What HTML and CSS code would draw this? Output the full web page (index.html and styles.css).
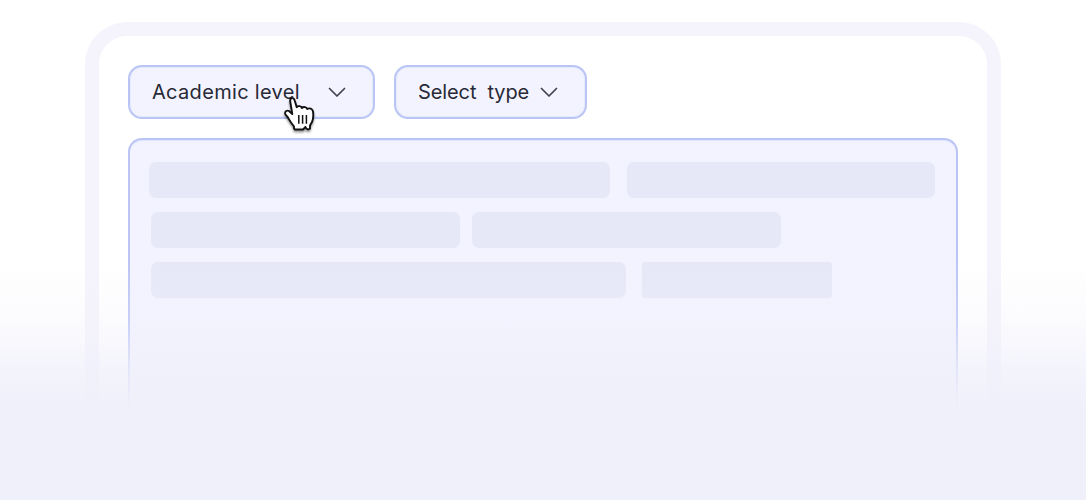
FILE: index.html
```html
<!doctype html>
<html lang="en">
<head>
<meta charset="utf-8">
<title>Academic level</title>
<link rel="stylesheet" href="styles.css">
</head>

<body>
	<div class="frame">
		<div class="filters">
			<div class="select level">
				<span class="level-label">Academic level</span>
				<svg class="chevron" viewBox="0 0 18 11"><path d="M1.5 1.5l7.5 7.5 7.5-7.5"/></svg>
				<svg class="cursor" viewBox="0 0 60 55">
					<path class="hand" d="M24 43.5V41.5L21 37.5 18.5 33.5C17.5 31.5 15.7 30.5 15.2 28.7C14.7 26.3 17 25 19 26L22.3 29L20.2 16.5C19.8 12.5 23.8 12 24.7 15.5L26.7 22.2C28 20.5 31.2 20.8 31.8 23C33.5 21.2 36.8 22 37.3 24C39.5 22.5 42.5 23.8 43 26.5C43.5 30 43.3 34 42 37L40 40.5V43.5C38.3 45 36.5 44.5 35.5 42L33 44.5H25Z"/>
					<path class="fingers" d="M28.8 30V38.7M32.6 30V38.7M36.4 30V38.7"/>
				</svg>
			</div>
			<div class="select type">
				<span class="type-label">Select&nbsp; type</span>
				<svg class="chevron" viewBox="0 0 18 11"><path d="M1.5 1.5l7.5 7.5 7.5-7.5"/></svg>
			</div>
		</div>
		<div class="panel">
			<div class="row first">
				<div class="bar w461"></div>
				<div class="bar w308"></div>
			</div>
			<div class="row second">
				<div class="bar w309"></div>
				<div class="bar w309"></div>
			</div>
			<div class="row third">
				<div class="bar w475"></div>
				<div class="bar w190"></div>
			</div>
		</div>
	</div>
	<div class="fade"></div>
</body>
</html>
```

FILE: styles.css
```css
html,body{
	margin: 0;
	height: 500px;
	overflow: hidden;
	background: #fff;
	font-family: Inter, "Liberation Sans", sans-serif;
}

body{
	position: relative;
	padding-top: 22px;
	box-sizing: border-box;
}

*{
	box-sizing: border-box;
}

.frame{
	width: 916px;
	height: 478px;
	margin: 0 0 0 85px;
	padding: 29px 29px 0;
	border: 14px solid #f5f4fc;
	border-bottom: 0;
	border-radius: 42px 42px 0 0;
	background: #fff;
}

.filters{
	display: flex;
	gap: 19px;
	margin-bottom: 19px;
}

.select{
	position: relative;
	display: flex;
	align-items: center;
	height: 54px;
	padding: 0 27px 0 22px;
	border: 2px solid #bac5f5;
	border-radius: 14px;
	background: #f3f3ff;
	box-shadow: inset 0 0 0 1px #e6eafd;
	color: #272936;
	font-size: 20px;
	justify-content: space-between;
	white-space: pre;
}

.level{
	width: 247px;
}

.type{
	width: 193px;
}

.level-label{
	letter-spacing: 0.32px;
}

.type-label{
	letter-spacing: -0.1px;
}

.chevron{
	width: 18px;
	height: 11px;
	fill: none;
	stroke: #414250;
	stroke-width: 1.7;
	stroke-linecap: round;
	stroke-linejoin: round;
}

.cursor{
	position: absolute;
	left: 140px;
	top: 18px;
	width: 60px;
	height: 55px;
	filter: drop-shadow(0 2px 1px rgba(0,0,0,0.4));
}

.hand{
	fill: #fff;
	stroke: #111;
	stroke-width: 1.9;
	stroke-linejoin: round;
}

.fingers{
	fill: none;
	stroke: #111;
	stroke-width: 1.5;
}

.panel{
	width: 830px;
	height: 362px;
	padding: 22px 0 0 19px;
	border: 2px solid #bac5f5;
	border-bottom: 0;
	border-radius: 14px 14px 0 0;
	background: #f3f3ff;
	box-shadow: inset 0 1px 0 #e0e5fc;
}

.row{
	display: flex;
	margin-bottom: 14px;
}

.first{
	gap: 17px;
}

.second{
	gap: 12px;
	padding-left: 2px;
}

.third{
	gap: 16px;
	padding-left: 2px;
}

.bar{
	height: 36px;
	border-radius: 7px;
	background: #e6e8f7;
}

.w461{
	width: 461px;
}

.w308{
	width: 308px;
}

.w309{
	width: 309px;
}

.w475{
	width: 475px;
}

.w190{
	width: 190px;
	border-radius: 3px;
}

/* lies over the lower part of the frame */
.fade{
	position: absolute;
	left: 0;
	right: 0;
	bottom: 0;
	height: 240px;
	background: linear-gradient(rgba(240,240,251,0), rgba(240,240,251,0.25) 25%, rgba(240,240,251,0.75) 45%, #f0f0fb 62%);
}
```
